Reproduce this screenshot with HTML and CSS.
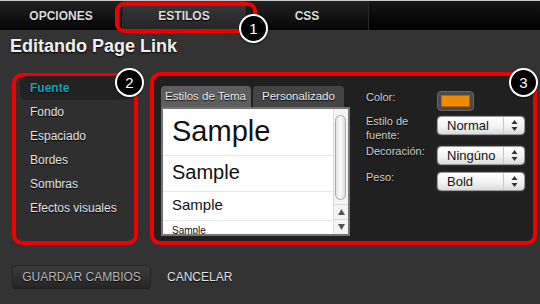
FILE: index.html
```html
<!DOCTYPE html>
<html lang="es">
<head>
<meta charset="utf-8">
<title>Editando Page Link</title>
<link rel="stylesheet" href="styles.css">
</head>
<body>
<div class="page">
  <nav class="topbar">
    <div class="tab">OPCIONES</div>
    <div class="tab tab-active">ESTILOS</div>
    <div class="tab">CSS</div>
    <div class="tab-fill"></div>
  </nav>

  <h1 class="title">Editando Page Link</h1>

  <div class="main">
    <aside class="side">
      <ul class="side-list">
        <li class="side-item side-item-active">Fuente</li>
        <li class="side-item">Fondo</li>
        <li class="side-item">Espaciado</li>
        <li class="side-item">Bordes</li>
        <li class="side-item">Sombras</li>
        <li class="side-item">Efectos visuales</li>
      </ul>
    </aside>

    <section class="editor">
      <div class="styles">
        <div class="style-tabs">
          <span class="stab stab-active">Estilos de Tema</span>
          <span class="stab">Personalizado</span>
        </div>
        <div class="list">
          <div class="samples">
            <div class="sample sample-1">Sample</div>
            <div class="sample sample-2">Sample</div>
            <div class="sample sample-3">Sample</div>
            <div class="sample sample-4">Sample</div>
          </div>
          <div class="scrollbar">
            <div class="track"><div class="thumb"></div></div>
            <div class="sb-btn">
              <svg width="7" height="6" viewBox="0 0 7 6"><polygon points="3.5,0 7,6 0,6" fill="#555"/></svg>
            </div>
            <div class="sb-btn">
              <svg width="7" height="6" viewBox="0 0 7 6"><polygon points="0,0 7,0 3.5,6" fill="#555"/></svg>
            </div>
          </div>
        </div>
      </div>

      <div class="form">
        <div class="row row-color">
          <span class="label">Color:</span>
          <span class="swatch"><span class="swatch-fill"></span></span>
        </div>
        <div class="row row-style">
          <span class="label">Estilo de<br>fuente:</span>
          <span class="select"><span class="select-text">Normal</span><span class="select-arrows"><svg width="7" height="11" viewBox="0 0 7 11"><polygon points="3.5,0 6.5,4 0.5,4" fill="#333"/><polygon points="0.5,7 6.5,7 3.5,11" fill="#333"/></svg></span></span>
        </div>
        <div class="row row-deco">
          <span class="label">Decoración:</span>
          <span class="select"><span class="select-text">Ningúno</span><span class="select-arrows"><svg width="7" height="11" viewBox="0 0 7 11"><polygon points="3.5,0 6.5,4 0.5,4" fill="#333"/><polygon points="0.5,7 6.5,7 3.5,11" fill="#333"/></svg></span></span>
        </div>
        <div class="row row-weight">
          <span class="label">Peso:</span>
          <span class="select"><span class="select-text">Bold</span><span class="select-arrows"><svg width="7" height="11" viewBox="0 0 7 11"><polygon points="3.5,0 6.5,4 0.5,4" fill="#333"/><polygon points="0.5,7 6.5,7 3.5,11" fill="#333"/></svg></span></span>
        </div>
      </div>
    </section>
  </div>

  <footer class="actions">
    <button class="btn-save">GUARDAR CAMBIOS</button>
    <button class="btn-cancel">CANCELAR</button>
  </footer>

  <div class="callout-box"></div>
  <div class="callout callout-1">1</div>
  <div class="callout callout-2">2</div>
  <div class="callout callout-3">3</div>
</div>
</body>
</html>
```

FILE: styles.css
```css
* { box-sizing: border-box; }

html, body {
  margin: 0;
  padding: 0;
}

body {
  width: 540px;
  height: 304px;
  overflow: hidden;
  background: #333333;
  font-family: "Liberation Sans", Arial, Helvetica, sans-serif;
  color: #e6e6e6;
}

.page {
  position: relative;
  width: 540px;
  height: 304px;
}

/* top tab bar */
.topbar {
  display: flex;
  height: 30px;
  border-top: 1px solid #c8c8c8;
  background: linear-gradient(#1c1c1c, #000000);
}

.tab {
  width: 123px;
  height: 29px;
  display: flex;
  align-items: center;
  justify-content: center;
  font-size: 12px;
  font-weight: bold;
  color: #dcdcdc;
  text-shadow: 0 1px 1px #000;
  border-right: 1px solid #2a2a2a;
  background: linear-gradient(#222222, #050505);
}

.tab-active {
  background: linear-gradient(#3a3a3a, #252525);
}

.tab-fill {
  flex: 1;
  background: linear-gradient(#161616, #000000);
}

/* title */
.title {
  margin: 0;
  padding: 5px 0 0 10px;
  font-size: 18px;
  line-height: 22px;
  font-weight: bold;
  color: #f0f0f0;
  text-shadow: 0 1px 2px #000;
}

/* main area */
.main {
  display: flex;
  align-items: flex-start;
  gap: 12px;
  margin-top: 15px;
  padding-left: 12px;
}

.side {
  width: 126px;
  height: 172px;
  margin-top: 1px;
  border: 4px solid #f00000;
  border-radius: 10px;
  background: #2f2f2f;
}

.side-list {
  list-style: none;
  margin: -1px 0 0 0;
  padding: 0;
}

.side-item {
  height: 24px;
  line-height: 24px;
  margin: 0 4px;
  padding-left: 10px;
  font-size: 12px;
  color: #e4e4e4;
  text-shadow: 0 1px 1px #000;
}

.side-item-active {
  background: #222222;
  border-radius: 6px;
  color: #19a3b6;
  font-weight: bold;
}

.editor {
  width: 387px;
  height: 173px;
  border: 4px solid #f00000;
  border-radius: 10px;
  background: #202020;
  display: flex;
  align-items: flex-start;
  padding: 10px 0 0 7px;
}

.styles {
  width: 189px;
}

.style-tabs {
  display: flex;
  gap: 2px;
  height: 21px;
}

.stab {
  height: 21px;
  line-height: 21px;
  padding: 0 0 0 4px;
  font-size: 11.5px;
  color: #efefef;
  background: #444444;
  border-radius: 4px 4px 0 0;
  text-shadow: 0 1px 1px #000;
}

.stab:first-child {
  width: 90px;
  background: #5e5e5e;
}

.stab:last-child {
  width: 91px;
  padding-left: 9px;
}

.list {
  display: flex;
  height: 129px;
  border: 2px solid #747474;
  background: #ffffff;
  overflow: hidden;
}

.samples {
  flex: 1;
  overflow: hidden;
}

.sample {
  padding-left: 9px;
  color: #111111;
  border-bottom: 1px solid #e8e8e8;
  white-space: nowrap;
}

.sample-1 { font-size: 29px; height: 47px; line-height: 44px; }
.sample-2 { font-size: 20px; height: 36px; line-height: 32px; }
.sample-3 { font-size: 15px; height: 29px; line-height: 25px; }
.sample-4 { font-size: 10px; height: 20px; line-height: 20px; border-bottom: 0; }

.scrollbar {
  width: 15px;
  display: flex;
  flex-direction: column;
  border-left: 1px solid #dddddd;
  background: #f3f3f3;
}

.track {
  flex: 1;
  padding: 6px 2px 3px 1px;
}

.thumb {
  height: 85px;
  border: 1px solid #a8a8a8;
  border-radius: 6px;
  background: linear-gradient(90deg, #e2e2e2, #fbfbfb 50%, #dcdcdc);
}

.sb-btn {
  height: 15px;
  display: flex;
  align-items: center;
  justify-content: center;
  border-top: 1px solid #d6d6d6;
}

/* form */
.form {
  margin-left: 16px;
  padding-top: 4px;
}

.row {
  display: flex;
  align-items: flex-start;
}

.row-style { margin-top: 3px; }
.row-deco { margin-top: 2px; }
.row-weight { margin-top: 5px; }

.label {
  width: 71px;
  font-size: 11px;
  line-height: 14px;
  color: #d0d0d0;
  text-shadow: 0 1px 1px #000;
}

.row-color .label { line-height: 14px; }

.swatch {
  width: 37px;
  height: 20px;
  margin-top: 1px;
  padding: 3px;
  border-radius: 4px;
  background: #4a4a4a;
  border: 1px solid #666;
  display: flex;
}

.swatch-fill {
  flex: 1;
  background: #f08a00;
  border: 1px solid #b86400;
}

.select {
  width: 88px;
  height: 19px;
  margin-top: 2px;
  display: flex;
  align-items: center;
  border-radius: 4px;
  border: 1px solid #9a9a9a;
  background: linear-gradient(#ffffff, #f2f2f2 55%, #dcdcdc);
  box-shadow: 0 0 2px rgba(255,255,255,0.25);
}

.select-text {
  flex: 1;
  padding-left: 9px;
  font-size: 13px;
  color: #111;
}

.select-arrows {
  width: 21px;
  height: 17px;
  display: flex;
  align-items: center;
  justify-content: center;
  border-left: 1px solid #c8c8c8;
}

/* footer */
.actions {
  display: flex;
  align-items: center;
  gap: 16px;
  margin-top: 20px;
  padding-left: 12px;
}

.btn-save {
  width: 139px;
  height: 23px;
  padding: 0;
  font-family: inherit;
  font-size: 12px;
  color: #b8b8b8;
  text-shadow: 0 1px 1px #000;
  border: 1px solid #262626;
  border-radius: 4px;
  background: linear-gradient(#3c3c3c, #262626);
  box-shadow: 0 1px 1px rgba(0,0,0,0.4);
}

.btn-cancel {
  padding: 0;
  border: 0;
  background: none;
  font-family: inherit;
  font-size: 12px;
  color: #e2e2e2;
  text-shadow: 0 1px 1px #000;
}

/* annotations (overlay) */
.callout-box {
  position: absolute;
  left: 115px;
  top: 2px;
  width: 142px;
  height: 31px;
  border: 4px solid #f00000;
  border-radius: 9px;
}

.callout {
  position: absolute;
  width: 29px;
  height: 29px;
  border: 2px solid #ffffff;
  border-radius: 50%;
  background: #000000;
  color: #ffffff;
  font-size: 15px;
  line-height: 25px;
  text-align: center;
  box-shadow: 0 1px 2px rgba(0,0,0,0.6);
}

.callout-1 { left: 239px; top: 14px; }
.callout-2 { left: 115px; top: 68px; }
.callout-3 { left: 509px; top: 68px; }
```
